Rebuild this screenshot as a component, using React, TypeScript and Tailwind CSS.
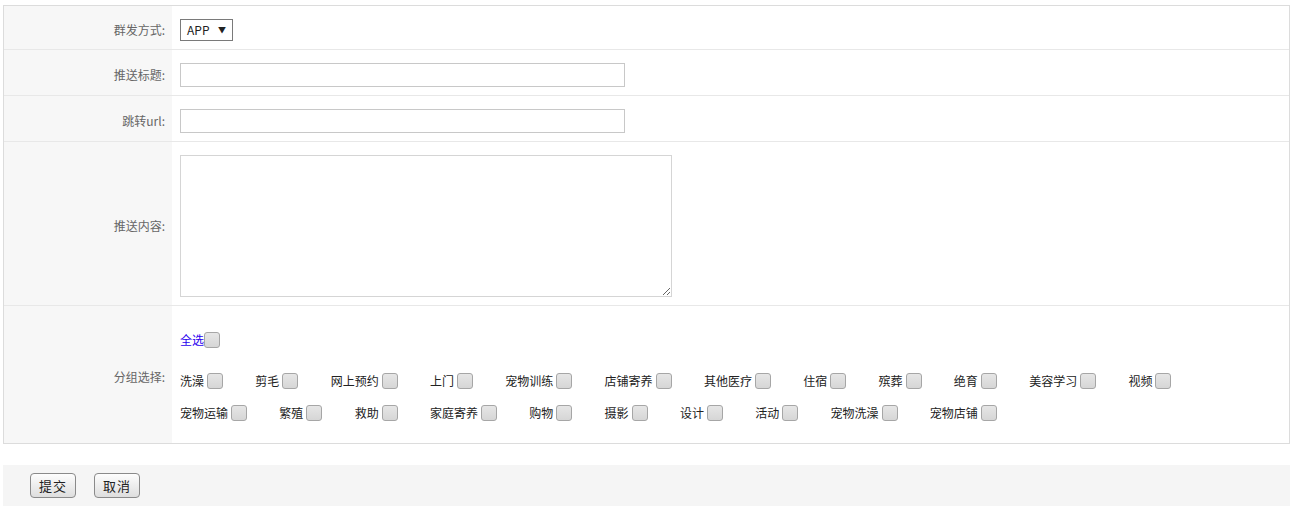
import React from "react";

const FONT = { fontFamily: '"Noto Sans CJK SC", "Liberation Sans", sans-serif' };

const row1 = ["洗澡", "剪毛", "网上预约", "上门", "宠物训练", "店铺寄养", "其他医疗", "住宿", "殡葬", "绝育", "美容学习", "视频"];
const row2 = ["宠物运输", "繁殖", "救助", "家庭寄养", "购物", "摄影", "设计", "活动", "宠物洗澡", "宠物店铺"];

function Box() {
  return (
    <input
      type="checkbox"
      className="appearance-none w-[16px] h-[16px] ml-[3px] rounded-[3px] border border-[#a6a6a6] bg-gradient-to-b from-[#e6e6e6] to-[#d6d6d6] shrink-0"
    />
  );
}

function Row({ label, children, last }: { label: string; children: React.ReactNode; last?: boolean }) {
  return (
    <div className={`flex ${last ? "" : "border-b border-[#e8e8e8]"}`}>
      <div className="w-[168px] shrink-0 bg-[#f7f7f7] flex items-center justify-end pr-[7px] pt-[13px] pb-[8px] text-[12px] text-[#666]">
        {label}
      </div>
      <div className="flex-1 pl-[8px] pt-[13px] pb-[8px]">{children}</div>
    </div>
  );
}

export default function App() {
  return (
    <div className="w-[1293px] h-[508px] bg-white pt-[5px] px-[3px]" style={FONT}>
      <div className="border border-[#dcdcdc]">
        <Row label="群发方式:">
          <div className="w-[53px] h-[22px] border border-[#7a7a7a] flex items-center justify-between pl-[6px] pr-[6px] text-[12px] text-[#222] bg-white">
            <span>APP</span>
            <span className="text-[8px]">▼</span>
          </div>
        </Row>
        <Row label="推送标题:">
          <input type="text" className="block w-[445px] h-[24px] border border-[#c8c8c8] outline-none" />
        </Row>
        <Row label="跳转url:">
          <input type="text" className="block w-[445px] h-[24px] border border-[#c8c8c8] outline-none" />
        </Row>
        <Row label="推送内容:">
          <textarea className="block w-[492px] h-[142px] border border-[#d5d5d5] outline-none" />
        </Row>
        <Row label="分组选择:" last>
          <div className="h-[42px] flex items-center text-[12px]">
            <a href="#" className="text-[#2a00ee] no-underline">全选</a>
            <input
              type="checkbox"
              className="appearance-none w-[16px] h-[16px] rounded-[3px] border border-[#a6a6a6] bg-gradient-to-b from-[#e6e6e6] to-[#d6d6d6]"
            />
          </div>
          <div className="mt-[4px] mb-[6px] text-[12px] text-[#222]">
            <div className="flex h-[32px] items-center">
              {row1.map((t) => (
                <div key={t} className="flex items-center mr-[32.3px]">
                  <span>{t}</span>
                  <Box />
                </div>
              ))}
            </div>
            <div className="flex h-[32px] items-center">
              {row2.map((t) => (
                <div key={t} className="flex items-center mr-[32.3px]">
                  <span>{t}</span>
                  <Box />
                </div>
              ))}
            </div>
          </div>
        </Row>
      </div>
      <div className="mt-[21px] h-[41px] bg-[#f5f5f5] flex items-center pl-[27px] gap-[18px]">
        <button className="w-[46px] h-[25px] rounded-[4px] border border-[#8a8a8a] bg-gradient-to-b from-[#fdfdfd] to-[#dedede] text-[13px] text-[#222] tracking-[1px]">
          提交
        </button>
        <button className="w-[46px] h-[25px] rounded-[4px] border border-[#8a8a8a] bg-gradient-to-b from-[#fdfdfd] to-[#dedede] text-[13px] text-[#222] tracking-[1px]">
          取消
        </button>
      </div>
    </div>
  );
}
